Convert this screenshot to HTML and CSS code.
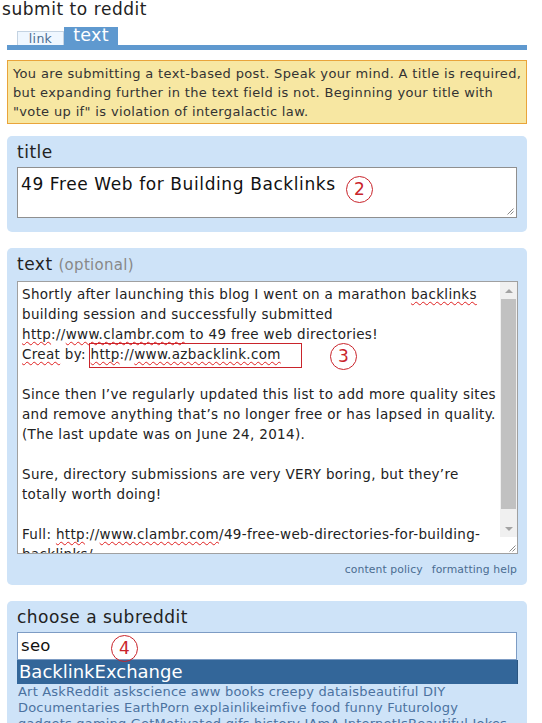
FILE: index.html
```html
<!DOCTYPE html>
<html lang="en">
<head>
<meta charset="utf-8">
<title>submit to reddit</title>
<link rel="stylesheet" href="styles.css">
</head>
<body>
<div class="page">
  <h1 class="page-title">submit to reddit</h1>
  <div class="tabs">
    <span class="tab">link</span>
    <span class="tab tab-active">text</span>
  </div>
  <div class="infobar">
    <div>You are submitting a text-based post. Speak your mind. A title is required,</div>
    <div>but expanding further in the text field is not. Beginning your title with</div>
    <div>"vote up if" is violation of intergalactic law.</div>
  </div>

  <div class="box box-title">
    <div class="label">title</div>
    <div class="field field-title">
      <div class="field-text">49 Free Web for Building Backlinks</div>
      <svg class="grip" width="7" height="7" viewBox="0 0 7 7"><path d="M0.5 6.5 L6.5 0.5 M3.5 6.5 L6.5 3.5" stroke="#8a8a8a" stroke-width="1" fill="none"/></svg>
    </div>
  </div>

  <div class="box box-text">
    <div class="label">text <span class="optional">(optional)</span></div>
    <div class="ta">
      <div class="ta-content">
        <div>Shortly after launching this blog I went on a marathon <span class="sp">backlinks</span></div>
        <div>building session and successfully submitted</div>
        <div><span class="sp">http</span>://<span class="sp">www.clambr.com</span> to 49 free web directories!</div>
        <div><span class="sp">Creat</span> by: <span class="sp">http</span>://<span class="sp">www.azbacklink.com</span></div>
        <div>&nbsp;</div>
        <div>Since then I’ve regularly updated this list to add more quality sites</div>
        <div>and remove anything that’s no longer free or has lapsed in quality.</div>
        <div>(The last update was on June 24, 2014).</div>
        <div>&nbsp;</div>
        <div>Sure, directory submissions are very VERY boring, but they’re</div>
        <div>totally worth doing!</div>
        <div>&nbsp;</div>
        <div>Full: <span class="sp">http</span>://<span class="sp">www.clambr.com</span>/49-free-web-directories-for-building-</div>
        <div><span class="sp">backlinks</span>/</div>
      </div>
      <div class="scrollbar">
        <div class="sb-btn"><span class="arrow-up"></span></div>
        <div class="sb-track"><div class="sb-thumb"></div></div>
        <div class="sb-btn"><span class="arrow-down"></span></div>
        <div class="sb-corner">
          <svg class="grip-static" width="7" height="7" viewBox="0 0 7 7"><path d="M0.5 6.5 L6.5 0.5 M3.5 6.5 L6.5 3.5" stroke="#8a8a8a" stroke-width="1" fill="none"/></svg>
        </div>
      </div>
    </div>
    <div class="box-footer">
      <a class="footer-link" href="#">content policy</a>
      <a class="footer-link" href="#">formatting help</a>
    </div>
  </div>

  <div class="box box-sub">
    <div class="label">choose a subreddit</div>
    <div class="sub-input">seo</div>
    <div class="sub-suggest">BacklinkExchange</div>
    <div class="sub-list">
      <div>Art AskReddit askscience aww books creepy dataisbeautiful DIY</div>
      <div>Documentaries EarthPorn explainlikeimfive food funny Futurology</div>
      <div>gadgets gaming GetMotivated gifs history IAmA InternetIsBeautiful Jokes</div>
    </div>
  </div>

  <div class="mark mark-circle mark-2">2</div>
  <div class="mark mark-rect"></div>
  <div class="mark mark-circle mark-3">3</div>
  <div class="mark mark-circle mark-4">4</div>
</div>
</body>
</html>
```

FILE: styles.css
```css
html, body {
  margin: 0;
  padding: 0;
  background: #ffffff;
}
body {
  font-family: "DejaVu Sans", Verdana, sans-serif;
  color: #222222;
  overflow: hidden;
}
.page {
  position: relative;
  width: 520px;
  padding: 0 15px 0 7px;
}
.page-title {
  margin: 0 0 0 -5px;
  font-size: 17px;
  letter-spacing: 0.55px;
  line-height: 18px;
  font-weight: normal;
  color: #222;
}
.tabs {
  margin-top: 9px;
  display: flex;
  align-items: flex-end;
  padding-left: 10px;
  border-bottom: 5px solid #5f99cf;
}
.tab {
  box-sizing: border-box;
  width: 47px;
  height: 14px;
  border: 1px solid #c4d3e2;
  border-bottom: none;
  background: #eff7ff;
  color: #4a6c91;
  font-size: 12.5px;
  letter-spacing: 0.3px;
  line-height: 14px;
  text-align: center;
}
.tab-active {
  width: 54px;
  height: 18px;
  border: none;
  background: #5f99cf;
  color: #ffffff;
  font-size: 17.5px;
  letter-spacing: 0.3px;
  line-height: 17px;
}
.infobar {
  margin-top: 10px;
  border: 1px solid #e9a43a;
  background: #f7e7a2;
  padding: 3px 5px 2px;
  font-size: 13px;
  letter-spacing: 0.35px;
  line-height: 19px;
  color: #333;
  white-space: nowrap;
}
.box {
  background: #cee3f8;
  border-radius: 5px;
  padding: 5px 10px 14px;
}
.box-title {
  margin-top: 12px;
}
.box-text {
  margin-top: 16px;
  padding-bottom: 7px;
}
.box-sub {
  margin-top: 16px;
  padding-bottom: 20px;
}
.label {
  font-size: 17px;
  letter-spacing: 0.5px;
  line-height: 22px;
  margin-bottom: 4px;
  color: #222;
}
.box-text .label {
  margin-bottom: 5px;
}
.optional {
  font-size: 15px;
  letter-spacing: 0.3px;
  color: #888888;
}
.field {
  position: relative;
  box-sizing: border-box;
  height: 51px;
  border: 1px solid #8f8f8f;
  background: #fff;
}
.field-text {
  padding: 6px 3px 0;
  font-size: 17px;
  letter-spacing: 0.6px;
  line-height: 20px;
  color: #111;
}
.grip {
  position: absolute;
  right: 2px;
  bottom: 2px;
}
.ta {
  box-sizing: border-box;
  height: 273px;
  width: 501px;
  border: 1px solid #a0a0a0;
  background: #fff;
  display: flex;
}
.ta-content {
  flex: 1;
  overflow: hidden;
  padding: 2px 0 0 4px;
  font-size: 13.5px;
  letter-spacing: 0.33px;
  line-height: 20px;
  white-space: nowrap;
  color: #222;
}
.sp {
  text-decoration: underline wavy #e02020;
  text-decoration-thickness: 1px;
  text-underline-offset: 2px;
  text-decoration-skip-ink: none;
}
.scrollbar {
  width: 17px;
  display: flex;
  flex-direction: column;
  background: #f0f0f0;
}
.sb-btn {
  height: 17px;
  display: flex;
  align-items: center;
  justify-content: center;
}
.arrow-up {
  width: 0;
  height: 0;
  border-left: 4px solid transparent;
  border-right: 4px solid transparent;
  border-bottom: 4px solid #a3a3a3;
}
.arrow-down {
  width: 0;
  height: 0;
  border-left: 4px solid transparent;
  border-right: 4px solid transparent;
  border-top: 4px solid #a3a3a3;
}
.sb-track {
  flex: 1;
  padding: 0 1px;
}
.sb-thumb {
  height: 210px;
  background: #c1c1c1;
}
.sb-corner {
  height: 16px;
  background: #fff;
  display: flex;
  align-items: flex-end;
  justify-content: flex-end;
  padding: 0 1px 1px 0;
  box-sizing: border-box;
}
.box-footer {
  margin-top: 8px;
  display: flex;
  justify-content: flex-end;
  gap: 9px;
  font-size: 10.8px;
  letter-spacing: 0.1px;
  line-height: 16px;
}
.footer-link {
  color: #4a6c91;
  text-decoration: none;
}
.sub-input {
  box-sizing: border-box;
  height: 28px;
  border: 1px solid #7d9cc4;
  background: #fff;
  padding: 0 3px;
  font-size: 16.5px;
  letter-spacing: 0.3px;
  line-height: 26px;
  color: #111;
}
.sub-suggest {
  box-sizing: border-box;
  height: 24px;
  width: 501px;
  background: #336699;
  color: #ffffff;
  font-size: 18px;
  line-height: 24px;
  padding-left: 2px;
  border-right: 1px solid #2a5580;
}
.sub-list {
  padding-left: 1px;
  font-size: 13px;
  letter-spacing: 0.2px;
  line-height: 16px;
  color: #4b72a0;
  white-space: nowrap;
}
.mark {
  position: absolute;
  box-sizing: border-box;
}
.mark-circle {
  width: 27px;
  height: 27px;
  border: 1px solid #c9242b;
  border-radius: 50%;
  color: #c9242b;
  font-size: 17px;
  line-height: 25px;
  text-align: center;
}
.mark-2 {
  left: 346px;
  top: 176px;
}
.mark-3 {
  left: 330px;
  top: 343px;
}
.mark-4 {
  left: 111px;
  top: 635px;
}
.mark-rect {
  left: 89px;
  top: 343px;
  width: 213px;
  height: 25px;
  border: 1px solid #c9242b;
}
```
